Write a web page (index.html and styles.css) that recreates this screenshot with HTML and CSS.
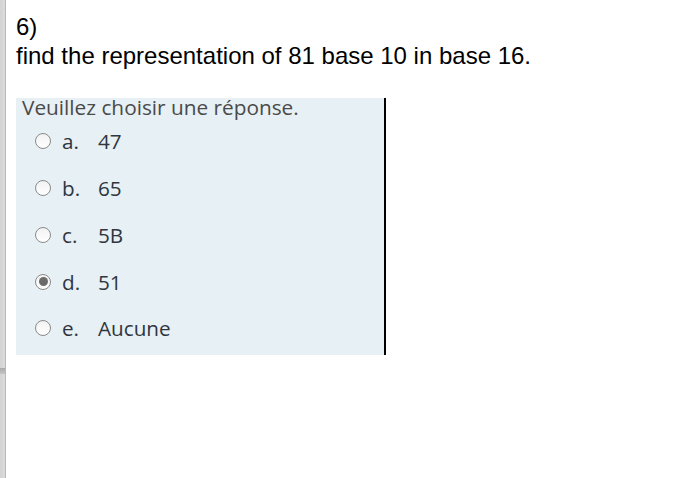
FILE: index.html
```html
<!DOCTYPE html>
<html>
<head>
<meta charset="utf-8">
<link rel="stylesheet" href="styles.css">
</head>
<body>
<div class="page">
  <div class="edge"></div>
  <main class="content">
    <div class="qtext">
      <div>6)</div>
      <div>find the representation of 81 base 10 in base 16.</div>
    </div>
    <div class="ablock">
      <div class="prompt">Veuillez choisir une réponse.</div>
      <div class="answers">
        <label class="opt"><span class="radio"></span><span class="letter">a.</span><span class="val">47</span></label>
        <label class="opt"><span class="radio"></span><span class="letter">b.</span><span class="val">65</span></label>
        <label class="opt"><span class="radio"></span><span class="letter">c.</span><span class="val">5B</span></label>
        <label class="opt"><span class="radio checked"></span><span class="letter">d.</span><span class="val">51</span></label>
        <label class="opt"><span class="radio"></span><span class="letter">e.</span><span class="val">Aucune</span></label>
      </div>
    </div>
  </main>
</div>
</body>
</html>
```

FILE: styles.css
```css
html, body {
  margin: 0;
  padding: 0;
  background: #ffffff;
}
.page {
  display: flex;
  min-height: 478px;
}
.edge {
  width: 5px;
  flex: none;
  border-right: 1px solid #b8b8b8;
  background:
    linear-gradient(#d6d6d6, #d6d6d6) 0 8px / 100% 1px no-repeat,
    linear-gradient(#a9a9a9, #c4c4c4) 0 368px / 100% 6px no-repeat,
    linear-gradient(90deg, #d2d2d2, #dcdcdc);
  background-color: #dadada;
}
.content {
  flex: 1;
  padding: 12px 0 0 10px;
}
.qtext {
  font-family: "Liberation Sans", Arial, sans-serif;
  font-size: 24px;
  line-height: 29px;
  color: #000;
}
.ablock {
  margin-top: 28px;
  width: 362px;
  background: #e7f0f4;
  border-right: 2px solid #000;
  padding: 0 0 3px 6px;
  font-family: "Open Sans", sans-serif;
}
.prompt {
  font-size: 20.8px;
  line-height: 18px;
  color: #4a4a4a;
}
.answers {
  display: flex;
  flex-direction: column;
  padding: 2px 0 0 13px;
}
.opt {
  display: flex;
  align-items: center;
  height: 46.75px;
  font-size: 20.7px;
  color: #2f3640;
}
.radio {
  box-sizing: border-box;
  width: 16px;
  height: 16px;
  border-radius: 50%;
  border: 1px solid #8a8a8a;
  background: linear-gradient(#f2f2f2, #ffffff);
  margin-right: 11px;
  display: flex;
  align-items: center;
  justify-content: center;
}
.radio.checked::after {
  content: "";
  width: 9px;
  height: 9px;
  border-radius: 50%;
  background: #6b6b6b;
}
.letter {
  width: 36px;
}
```
